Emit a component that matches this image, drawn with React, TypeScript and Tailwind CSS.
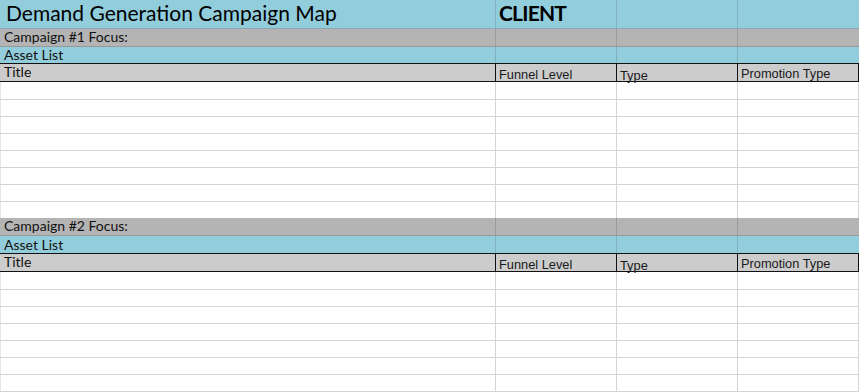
import React from "react";

const CAL = { fontFamily: "Lato, 'Noto Sans', sans-serif" };
const helv = { fontFamily: "'Liberation Sans', Arial, sans-serif" };

function Cells({
  h,
  bg,
  rowBorder,
  colBorder,
  right,
  children,
}: {
  h: string;
  bg: string;
  rowBorder: string;
  colBorder: string;
  right?: boolean;
  children?: React.ReactNode[];
}) {
  const kids = children ?? [null, null, null, null];
  return (
    <div className={`grid grid-cols-[495px_121px_121px_122px] box-border border-b ${h} ${bg} ${rowBorder}`}>
      <div className="flex items-end pl-[4px] whitespace-nowrap">{kids[0]}</div>
      <div className={`flex items-end pl-[3px] border-l whitespace-nowrap ${colBorder}`}>{kids[1]}</div>
      <div className={`flex items-end pl-[3px] border-l whitespace-nowrap ${colBorder}`}>{kids[2]}</div>
      <div className={`flex items-end pl-[3px] border-l whitespace-nowrap ${colBorder} ${right ? "border-r" : ""}`}>{kids[3]}</div>
    </div>
  );
}

function WhiteRow({ h, last }: { h: string; last?: boolean }) {
  return (
    <div className={`grid grid-cols-[495px_121px_121px_122px] box-border ${last ? "" : "border-b"} border-[#d4d4d4] ${h} bg-white`}>
      <div className="border-l border-[#e6e6e6]" />
      <div className="border-l border-[#d4d4d4]" />
      <div className="border-l border-[#d4d4d4]" />
      <div className="border-l border-r border-[#d4d4d4]" />
    </div>
  );
}

const small = "text-[14px] text-[#111] leading-none";
const hv = "text-[12.8px] text-[#1a1a1a] leading-[13px]";

function Section({ n, first }: { n: number; first: boolean }) {
  return (
    <>
      <Cells h="h-[18px]" bg="bg-[#b4b4b4]" rowBorder="border-[#999999]" colBorder="border-[#9c9c9c]">
        {[
          <span key="a" className={`${small} pb-[2px]`} style={CAL}>
            Campaign #{n} Focus:
          </span>,
          null,
          null,
          null,
        ]}
      </Cells>
      <Cells
        h={first ? "h-[17px]" : "h-[18px]"}
        bg="bg-[#92cddc]"
        rowBorder="border-[#111111]"
        colBorder="border-[#7fb0be]"
      >
        {[
          <span key="a" className={`${small} pb-[1px]`} style={CAL}>
            Asset List
          </span>,
          null,
          null,
          null,
        ]}
      </Cells>
      <Cells h="h-[18px]" bg="bg-[#cccccc]" rowBorder="border-[#111111]" colBorder="border-[#111111]" right>
        {[
          <span key="a" className={`${small} pb-[2px]`} style={CAL}>
            Title
          </span>,
          <span key="b" className={`${hv} pb-0`} style={helv}>
            Funnel Level
          </span>,
          <span key="c" className="text-[12.8px] text-[#1a1a1a] leading-[11px] pb-0" style={helv}>
            Type
          </span>,
          <span key="d" className={`${hv} pb-[1px]`} style={helv}>
            Promotion Type
          </span>,
        ]}
      </Cells>
      <WhiteRow h="h-[18px]" />
      <WhiteRow h="h-[17px]" />
      <WhiteRow h="h-[17px]" />
      <WhiteRow h="h-[17px]" />
      <WhiteRow h="h-[17px]" />
      <WhiteRow h="h-[17px]" />
      <WhiteRow h="h-[17px]" />
      {first && <WhiteRow h="h-[16px]" last />}
    </>
  );
}

export default function App() {
  return (
    <div className="w-[859px] h-[392px] overflow-hidden bg-white">
      <div className="grid grid-cols-[495px_121px_121px_122px] box-border border-b border-[#8aa8b1] h-[29px] bg-[#92cddc]">
        <div className="flex items-end pl-[6px] pb-[5px] whitespace-nowrap">
          <span className="text-[21px] leading-none text-black" style={CAL}>
            Demand Generation Campaign Map
          </span>
        </div>
        <div className="flex items-end pl-[3px] pb-[5px] border-l border-[#7fb0be] whitespace-nowrap">
          <span className="text-[21px] leading-none font-bold tracking-[-0.8px] text-black" style={CAL}>
            CLIENT
          </span>
        </div>
        <div className="border-l border-[#7fb0be]" />
        <div className="border-l border-[#7fb0be]" />
      </div>
      <Section n={1} first />
      <Section n={2} first={false} />
    </div>
  );
}
